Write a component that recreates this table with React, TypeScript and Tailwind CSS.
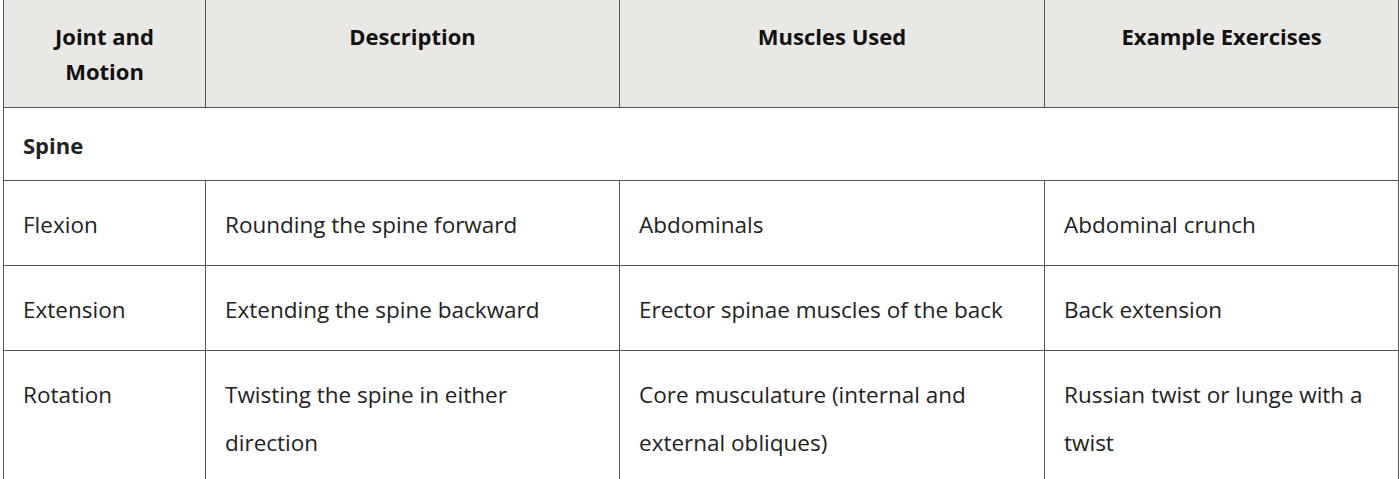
const rows = [
  {
    joint: 'Flexion',
    desc: 'Rounding the spine forward',
    muscles: 'Abdominals',
    example: 'Abdominal crunch',
  },
  {
    joint: 'Extension',
    desc: 'Extending the spine backward',
    muscles: 'Erector spinae muscles of the back',
    example: 'Back extension',
  },
  {
    joint: 'Rotation',
    desc: 'Twisting the spine in either direction',
    muscles: 'Core musculature (internal and external obliques)',
    example: 'Russian twist or lunge with a twist',
  },
];

const th = "border border-t-0 border-[#555] bg-[#e9e8e4] px-[18px] pt-[19px] pb-[18px] text-center align-top font-bold text-[22px] text-[#111] leading-[35px]";
const td = "border border-[#555] pl-[19px] pr-[17px] pt-[20px] pb-[16px] align-top text-[#222] leading-[48px]";

export default function App() {
  return (
    <div className="w-[1399px] h-[479px] overflow-hidden bg-white pl-[3px] pr-[1px] font-['Open_Sans','Noto_Sans',sans-serif] text-[22.5px]">
      <table className="w-[1395px] table-fixed border-collapse">
        <colgroup>
          <col className="w-[202px]" />
          <col className="w-[414px]" />
          <col className="w-[425px]" />
          <col className="w-[354px]" />
        </colgroup>
        <thead>
          <tr>
            <th className={th}>Joint and Motion</th>
            <th className={th}>Description</th>
            <th className={th}>Muscles Used</th>
            <th className={th}>Example Exercises</th>
          </tr>
        </thead>
        <tbody>
          <tr>
            <td colSpan={4} className="border border-[#555] pl-[19px] pr-[17px] pt-[13px] pb-[11px] align-top font-bold text-[22px] text-[#222] leading-[48px]">
              Spine
            </td>
          </tr>
          {rows.map((r) => (
            <tr key={r.joint}>
              <td className={td}>{r.joint}</td>
              <td className={td}>{r.desc}</td>
              <td className={td}>{r.muscles}</td>
              <td className={td}>{r.example}</td>
            </tr>
          ))}
        </tbody>
      </table>
    </div>
  );
}
